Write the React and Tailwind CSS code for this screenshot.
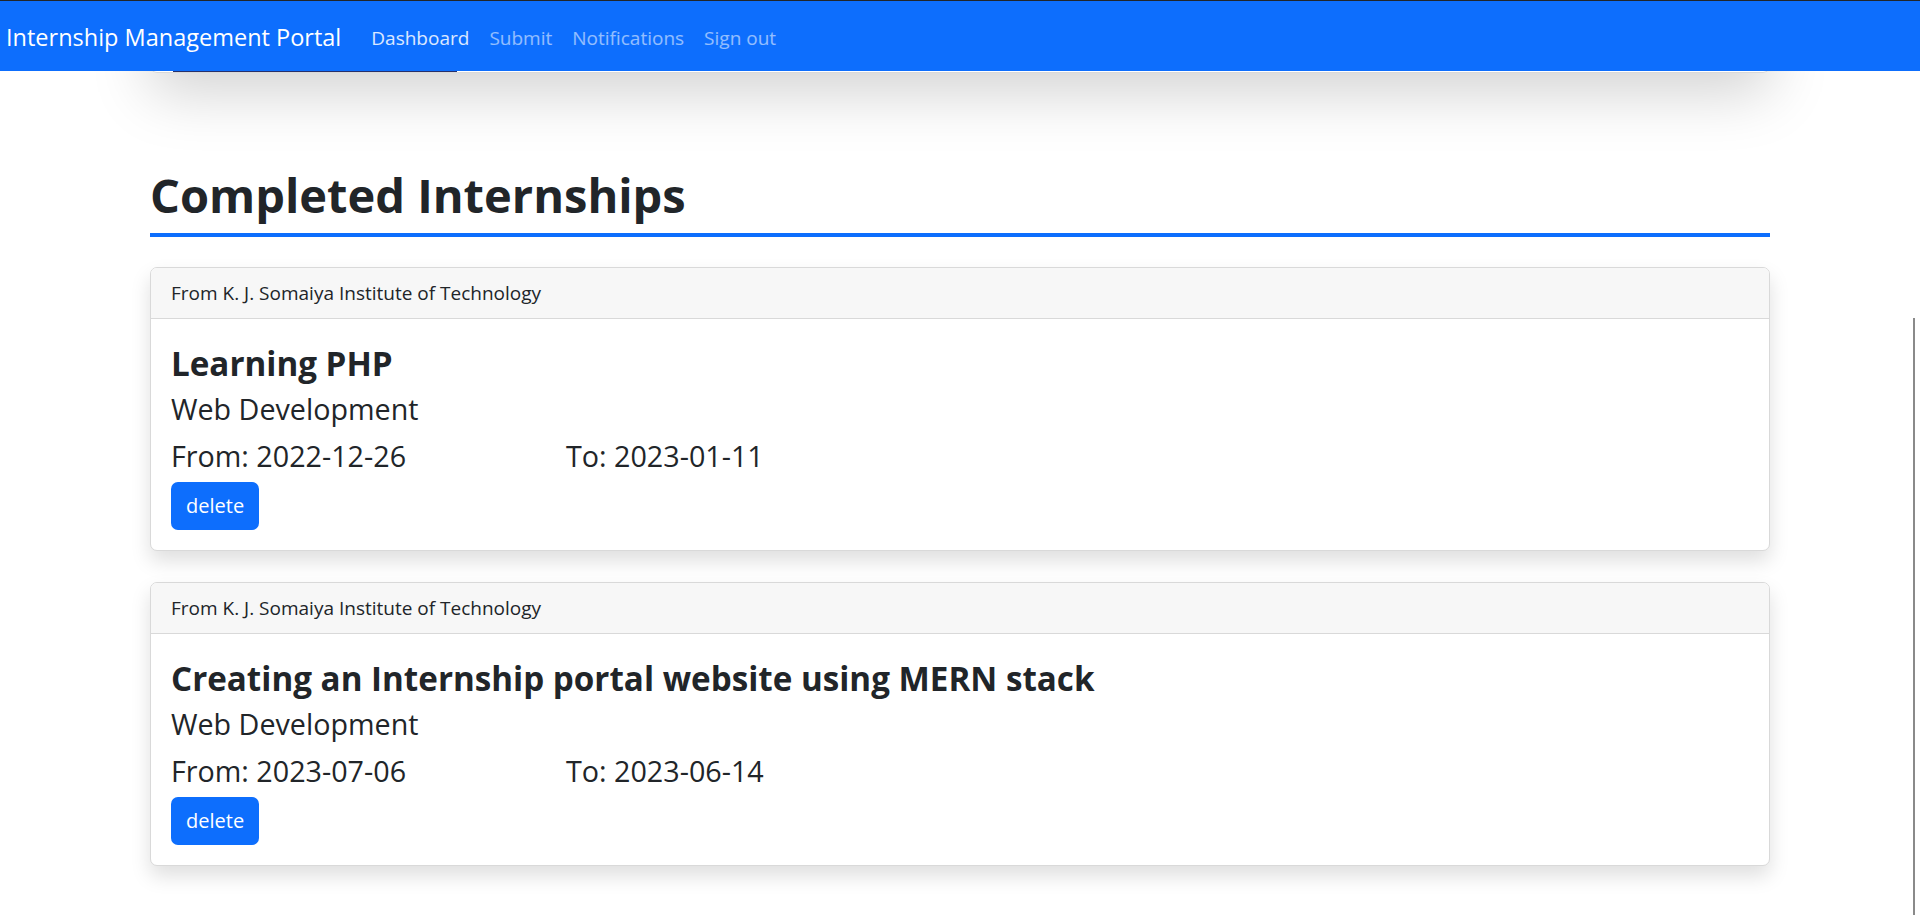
import React from "react";

const internships = [
  {
    id: 1,
    institute: "K. J. Somaiya Institute of Technology",
    title: "Learning PHP",
    domain: "Web Development",
    from: "2022-12-26",
    to: "2023-01-11",
  },
  {
    id: 2,
    institute: "K. J. Somaiya Institute of Technology",
    title: "Creating an Internship portal website using MERN stack",
    domain: "Web Development",
    from: "2023-07-06",
    to: "2023-06-14",
  },
];

const Navbar = () => {
  return (
    <nav className="relative z-10 h-[71px] bg-[#0d6efd] border-t border-[#212529] flex items-center pl-[6px] pt-[4px]">
      <a href="#" className="text-[23.5px] text-white mr-[20px] leading-none">
        Internship Management Portal
      </a>
      <ul className="flex items-center text-[19px]">
        <li>
          <a href="#" className="px-[10px] text-white/85">
            Dashboard
          </a>
        </li>
        <li>
          <a href="#" className="px-[10px] text-white/55">
            Submit
          </a>
        </li>
        <li>
          <a href="#" className="px-[10px] text-white/55">
            Notifications
          </a>
        </li>
        <li>
          <a href="#" className="px-[10px] text-white/55">
            Sign out
          </a>
        </li>
      </ul>
    </nav>
  );
};

const InternshipCard = ({ item }) => {
  return (
    <div className="bg-white border border-[#d9d9d9] rounded-[7px] shadow-[0_10px_20px_rgba(0,0,0,0.13)] mb-[31px] overflow-hidden">
      <div className="h-[51px] bg-[#f7f7f7] border-b border-[#d9d9d9] px-[20px] flex items-center text-[19px] text-[#212529]">
        From {item.institute}
      </div>
      <div className="px-[20px] pt-[24px] pb-[20px] text-[#212529]">
        <h4 className="text-[33.2px] font-bold leading-[42px] mb-[2px]">{item.title}</h4>
        <p className="text-[28.7px] leading-[44px]">{item.domain}</p>
        <div className="flex mt-[1px] text-[28.7px] leading-[48px]">
          <span className="w-[395px]">From: {item.from}</span>
          <span>To: {item.to}</span>
        </div>
        <button className="mt-[2px] bg-[#0d6efd] text-white text-[20px] leading-[30px] px-[15px] py-[9px] rounded-[7px]">
          delete
        </button>
      </div>
    </div>
  );
};

export default function App() {
  return (
    <div className="relative h-[915px] overflow-hidden bg-white font-['Open_Sans',sans-serif]">
      <Navbar />
      <div className="w-[1620px] mx-auto">
        {/* bottom of the previous card, scrolled under the navbar */}
        <div className="relative -mt-[200px] h-[202px] flex items-end border-x border-b border-[#d9d9d9] rounded-b-[7px] shadow-[0_20px_60px_rgba(0,0,0,0.175)]">
          <div className="ml-[22px] w-[284px] h-[2px] bg-[#26306a]"></div>
        </div>
        <h1 className="mt-[92px] text-[47px] font-bold leading-[60px] text-[#212529] border-b-4 border-[#0d6efd] pb-[8px]">
          Completed Internships
        </h1>
        <div className="mt-[30px]">
          {internships.map((item) => (
            <InternshipCard key={item.id} item={item} />
          ))}
        </div>
      </div>
      <div className="absolute right-[5px] top-[318px] w-[2px] h-[597px] bg-[#8a8a8a]"></div>
    </div>
  );
}
